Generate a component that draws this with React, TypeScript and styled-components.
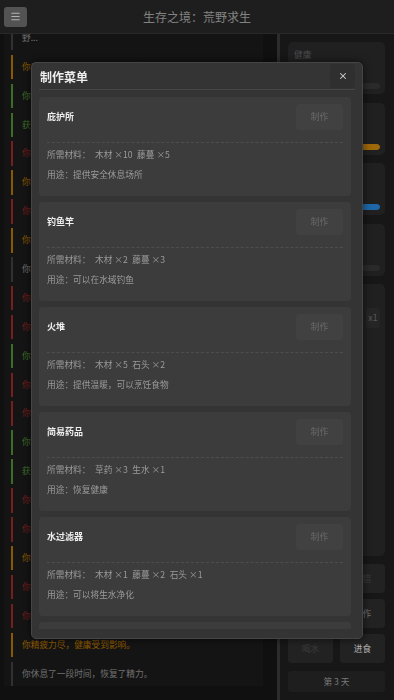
import React from 'react'
import styled, {createGlobalStyle} from 'styled-components'
import {Menu, X} from 'lucide-react'

const GlobalStyle = createGlobalStyle`
  html, body {
    margin: 0;
    padding: 0;
    background: #171717;
  }
  body {
    font-family: "Noto Sans CJK SC", "Noto Sans", sans-serif;
  }
  * {
    box-sizing: border-box;
  }
`

type Tone = 'info' | 'warn' | 'good' | 'bad'

const toneColor: Record<Tone, {text: string; bar: string}> = {
  info: {text: '#a0a0a0', bar: '#474747'},
  warn: {text: '#c88000', bar: '#c88000'},
  good: {text: '#569d39', bar: '#569d39'},
  bad: {text: '#ab2b2b', bar: '#ab2b2b'},
}

const logs: {tone: Tone; text: string}[] = [
  {tone: 'info', text: '你在一次海难中幸存下来，醒来时发现自己身处一片陌生荒野...'},
  {tone: 'warn', text: '你感到有些饥饿，需要尽快进食。'},
  {tone: 'good', text: '你在河边找到了一些干净的水源。'},
  {tone: 'good', text: '获得了木材 ×3。'},
  {tone: 'bad', text: '你被荆棘划伤，健康 -5。'},
  {tone: 'warn', text: '你感到口渴，需要补充水分。'},
  {tone: 'bad', text: '你遭遇了一只野狼，受了伤。'},
  {tone: 'warn', text: '你感到疲惫，需要休息。'},
  {tone: 'info', text: '你在营地附近四处探索。'},
  {tone: 'bad', text: '你饿得头晕眼花，健康 -3。'},
  {tone: 'bad', text: '你渴得嘴唇干裂，健康 -3。'},
  {tone: 'good', text: '你成功采集到了草药。'},
  {tone: 'bad', text: '你在夜里着凉了，健康 -4。'},
  {tone: 'bad', text: '你失足摔倒，健康 -2。'},
  {tone: 'good', text: '你找到了一处可以避雨的岩洞。'},
  {tone: 'good', text: '获得了藤蔓 ×2。'},
  {tone: 'bad', text: '你被毒虫叮咬，健康 -5。'},
  {tone: 'bad', text: '你的伤口开始发炎，健康 -3。'},
  {tone: 'warn', text: '你发现天色渐暗，气温开始下降。'},
  {tone: 'bad', text: '你饥肠辘辘，健康 -2。'},
  {tone: 'bad', text: '你口干舌燥，健康 -2。'},
  {tone: 'warn', text: '你精疲力尽，健康受到影响。'},
  {tone: 'info', text: '你休息了一段时间，恢复了精力。'},
]

const stats = [
  {label: '健康', value: 42, color: '#d9483b'},
  {label: '饱食', value: 100, color: '#e4960e'},
  {label: '水分', value: 100, color: '#2b96f3'},
  {label: '精力', value: 0, color: '#8bc34a'},
]

const recipes = [
  {name: '庇护所', needs: ['木材 ×10', '藤蔓 ×5'], use: '提供安全休息场所'},
  {name: '钓鱼竿', needs: ['木材 ×2', '藤蔓 ×3'], use: '可以在水域钓鱼'},
  {name: '火堆', needs: ['木材 ×5', '石头 ×2'], use: '提供温暖，可以烹饪食物'},
  {name: '简易药品', needs: ['草药 ×3', '生水 ×1'], use: '恢复健康'},
  {name: '水过滤器', needs: ['木材 ×1', '藤蔓 ×2', '石头 ×1'], use: '可以将生水净化'},
  {name: '石斧', needs: ['木材 ×2', '石头 ×3'], use: '提高采集木材的效率'},
  {name: '长矛', needs: ['木材 ×3', '石头 ×1'], use: '可以用于狩猎'},
]

const actions = [
  {label: '探索', color: '#535353'},
  {label: '狩猎', color: '#535353'},
  {label: '休息', color: '#a4a4a4'},
  {label: '制作', color: '#a4a4a4'},
  {label: '喝水', color: '#535353'},
  {label: '进食', color: '#ffffff'},
]

const Page = styled.div`
  height: 700px;
  display: flex;
  flex-direction: column;
  overflow: hidden;
`

const Header = styled.header`
  height: 34px;
  flex-shrink: 0;
  display: grid;
  grid-template-columns: 23px 1fr 23px;
  align-items: center;
  padding: 0 4px;
  background: #2c2c2c;
  border-bottom: 1px solid #3b3b3b;
`

const MenuButton = styled.button`
  width: 23px;
  height: 20px;
  padding: 0;
  border: none;
  border-radius: 3px;
  background: #787878;
  color: #fff;
  display: flex;
  align-items: center;
  justify-content: center;
`

const Title = styled.h1`
  margin: 0;
  text-align: center;
  font-size: 12px;
  font-weight: 400;
  color: #bababa;
`

const Main = styled.main`
  flex: 1;
  min-height: 0;
  display: flex;
`

const LogColumn = styled.section`
  width: 277px;
  flex-shrink: 0;
  display: flex;
  padding: 0 14px 14px 4px;
`

const LogBox = styled.div`
  flex: 1;
  background: #1d1d1d;
  padding: 0 8px 0 7px;
  display: flex;
  flex-direction: column;
  justify-content: flex-end;
  gap: 4.4px;
  overflow: hidden;
`

const LogEntry = styled.div<{$tone: Tone}>`
  flex-shrink: 0;
  border-left: 2px solid ${p => toneColor[p.$tone].bar};
  padding: 6px 0 6px 9px;
  font-size: 8.7px;
  line-height: 12.5px;
  color: ${p => toneColor[p.$tone].text};
`

const Sidebar = styled.aside`
  flex: 1;
  background: #212121;
  border-left: 3px solid #3f3f3f;
  padding: 8px 9px 8px 8px;
  display: flex;
  flex-direction: column;
  gap: 8.5px;
`

const StatCard = styled.div`
  height: 52px;
  flex-shrink: 0;
  background: #2e2e2e;
  border-radius: 5px;
  padding: 7px 5px 5px 6px;
  display: flex;
  flex-direction: column;
  justify-content: space-between;
`

const StatLabel = styled.div`
  font-size: 8.7px;
  line-height: 12px;
  color: #6b6b6b;
`

const Track = styled.div`
  height: 6px;
  border-radius: 3px;
  background: #3d3d3d;
  overflow: hidden;
`

const Fill = styled.div<{$color: string}>`
  height: 100%;
  border-radius: 3px;
  background: ${p => p.$color};
`

const Inventory = styled.div`
  flex: 1;
  background: #2e2e2e;
  border-radius: 5px;
  padding: 6px 5px 6px 6px;
`

const InvTitle = styled.div`
  font-size: 8.7px;
  line-height: 12px;
  color: #6b6b6b;
  margin-bottom: 6px;
`

const ItemRow = styled.div`
  height: 20px;
  display: flex;
  align-items: center;
  justify-content: space-between;
  font-size: 8.7px;
  color: #808080;
`

const Count = styled.span`
  height: 20px;
  line-height: 20px;
  padding: 0 2.5px;
  border-radius: 3px;
  background: #363636;
  color: #808080;
`

const ActionGrid = styled.div`
  display: grid;
  grid-template-columns: 1fr 1fr;
  gap: 6.5px 7px;
`

const ActionButton = styled.button<{$color: string}>`
  height: 28.5px;
  border: none;
  border-radius: 4px;
  background: #323232;
  color: ${p => p.$color};
  font-family: inherit;
  font-size: 8.7px;
  padding: 0;
`

const DayBox = styled.div`
  height: 21px;
  flex-shrink: 0;
  border-radius: 4px;
  background: #2c2c2c;
  color: #ababab;
  font-size: 8.7px;
  line-height: 21px;
  text-align: center;
`

const Overlay = styled.div`
  position: fixed;
  inset: 0;
  background: rgba(0, 0, 0, 0.3);
  display: flex;
  align-items: center;
  justify-content: center;
`

const Modal = styled.div`
  width: 332px;
  height: 577px;
  background: #343434;
  border: 1px solid #454545;
  border-radius: 5px;
  padding: 0 7px 9px;
  display: flex;
  flex-direction: column;
  box-shadow: 0 0 10px rgba(0, 0, 0, 0.6);
`

const ModalHead = styled.div`
  height: 27px;
  flex-shrink: 0;
  display: flex;
  align-items: center;
  justify-content: space-between;
  border-bottom: 1px solid #464646;
`

const ModalTitle = styled.h2`
  margin: 2px 0 0 1px;
  font-size: 12px;
  font-weight: 700;
  color: #eeeeee;
`

const CloseButton = styled.button`
  width: 25px;
  height: 24px;
  padding: 0;
  border: none;
  border-radius: 4px;
  background: #2f2f2f;
  color: #cfcfcf;
  display: flex;
  align-items: center;
  justify-content: center;
`

const RecipeList = styled.div`
  flex: 1;
  min-height: 0;
  margin-top: 7px;
  padding-right: 4px;
  overflow-y: auto;
  display: flex;
  flex-direction: column;
  gap: 6px;

  &::-webkit-scrollbar {
    width: 4px;
  }
  &::-webkit-scrollbar-track {
    background: transparent;
  }
  &::-webkit-scrollbar-thumb {
    background: #5a5a5a;
    border-radius: 2px;
  }
`

const RecipeCard = styled.div`
  flex-shrink: 0;
  background: #3c3c3c;
  border-radius: 4px;
  padding: 7px 8px 15px;
`

const RecipeHead = styled.div`
  display: flex;
  align-items: center;
  justify-content: space-between;
  padding-bottom: 12px;
  border-bottom: 1px dashed #4e4e4e;
`

const RecipeName = styled.div`
  font-size: 9px;
  font-weight: 700;
  color: #eeeeee;
`

const CraftButton = styled.button`
  width: 47px;
  height: 26px;
  padding: 0;
  border: none;
  border-radius: 4px;
  background: #414141;
  color: #6a6a6a;
  font-family: inherit;
  font-size: 8.7px;
`

const InfoRow = styled.div<{$gap: number}>`
  margin-top: ${p => p.$gap}px;
  display: flex;
  gap: 4.5px;
  font-size: 8.7px;
  line-height: 13px;
  color: #9a9a9a;
`

export default function App() {
  return (
    <>
      <GlobalStyle />
      <Page>
        <Header>
          <MenuButton>
            <Menu size={11} strokeWidth={2.5} />
          </MenuButton>
          <Title>生存之境：荒野求生</Title>
          <span />
        </Header>
        <Main>
          <LogColumn>
            <LogBox>
              {logs.map((l, i) => (
                <LogEntry key={i} $tone={l.tone}>
                  {l.text}
                </LogEntry>
              ))}
            </LogBox>
          </LogColumn>
          <Sidebar>
            {stats.map(s => (
              <StatCard key={s.label}>
                <StatLabel>{s.label}</StatLabel>
                <Track>
                  <Fill $color={s.color} style={{width: `${s.value}%`}} />
                </Track>
              </StatCard>
            ))}
            <Inventory>
              <InvTitle>背包</InvTitle>
              <ItemRow>
                <span>草药</span>
                <Count>x1</Count>
              </ItemRow>
            </Inventory>
            <ActionGrid>
              {actions.map(a => (
                <ActionButton key={a.label} $color={a.color}>
                  {a.label}
                </ActionButton>
              ))}
            </ActionGrid>
            <DayBox>第 3 天</DayBox>
          </Sidebar>
        </Main>
      </Page>
      <Overlay>
        <Modal>
          <ModalHead>
            <ModalTitle>制作菜单</ModalTitle>
            <CloseButton>
              <X size={10} strokeWidth={2.5} />
            </CloseButton>
          </ModalHead>
          <RecipeList>
            {recipes.map(r => (
              <RecipeCard key={r.name}>
                <RecipeHead>
                  <RecipeName>{r.name}</RecipeName>
                  <CraftButton disabled>制作</CraftButton>
                </RecipeHead>
                <InfoRow $gap={5}>
                  <span>所需材料：</span>
                  {r.needs.map(n => (
                    <span key={n}>{n}</span>
                  ))}
                </InfoRow>
                <InfoRow $gap={7}>用途：{r.use}</InfoRow>
              </RecipeCard>
            ))}
          </RecipeList>
        </Modal>
      </Overlay>
    </>
  )
}
